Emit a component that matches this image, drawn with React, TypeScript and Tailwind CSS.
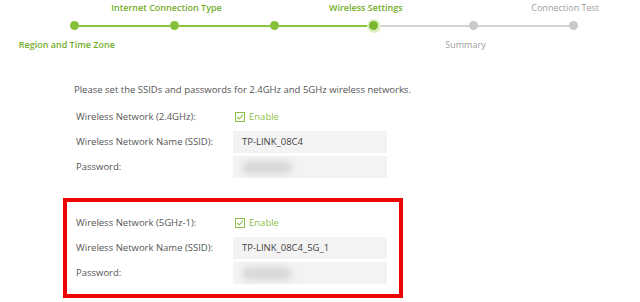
import React from "react";

const font = { fontFamily: '"Open Sans", "DejaVu Sans", sans-serif' };

function Check() {
  return (
    <svg width="10" height="10" viewBox="0 0 10 10" className="shrink-0">
      <rect x="0.5" y="0.5" width="9" height="9" fill="none" stroke="#8cbf4a" strokeWidth="1" />
      <path d="M2.3 5 L4.2 7 L8 2.6" fill="none" stroke="#8cbf4a" strokeWidth="1.1" />
    </svg>
  );
}

type Step = { top?: string; bottom?: string };
const steps: Step[] = [
  { bottom: "Region and Time Zone" },
  { top: "Internet Connection Type" },
  {},
  { top: "Wireless Settings" },
  { bottom: "Summary" },
  { top: "Connection Test" },
];
const current = 3;

function Stepper() {
  return (
    <div className="ml-[25px] grid w-[598px] grid-cols-6">
      {steps.map((s, i) => {
        const done = i <= current;
        const leftGreen = i <= current;
        const rightGreen = i < current;
        return (
          <div key={i} className="flex flex-col">
            <div className="flex h-[18px] items-start justify-center pt-[2px]">
              {s.top && (
                <span
                  className={`-translate-x-2 whitespace-nowrap text-[9px] leading-[12px] ${
                    done ? "text-[#74ad2a] font-semibold" : "text-[#9d9d9d]"
                  }`}
                >
                  {s.top}
                </span>
              )}
            </div>
            <div className="flex h-[15px] items-center">
              <div className={`h-[2px] flex-1 ${i === 0 ? "" : leftGreen ? "bg-[#8cc63f]" : "bg-[#d4d4d4]"}`} />
              {i === current ? (
                <div className="flex h-[14px] w-[14px] items-center justify-center rounded-full bg-[#dff0c4]">
                  <div className="h-[9px] w-[9px] rounded-full bg-[#7cb82f]" />
                </div>
              ) : (
                <div className={`h-[9px] w-[9px] rounded-full ${done ? "bg-[#84c03a]" : "bg-[#c9c9c9]"}`} />
              )}
              <div className={`h-[2px] flex-1 ${i === 5 ? "" : rightGreen ? "bg-[#8cc63f]" : "bg-[#d4d4d4]"}`} />
            </div>
            <div className="flex h-[19px] items-start justify-center pt-[6px]">
              {s.bottom && (
                <span
                  className={`-translate-x-2 whitespace-nowrap text-[9px] leading-[12px] ${
                    done ? "text-[#74ad2a] font-semibold" : "text-[#a0a0a0]"
                  }`}
                >
                  {s.bottom}
                </span>
              )}
            </div>
          </div>
        );
      })}
    </div>
  );
}

function Input({ value, blurred }: { value?: string; blurred?: boolean }) {
  return (
    <div className="flex h-[22px] w-[154px] items-center bg-[#f3f3f3] pl-[9px] text-[9.5px] text-[#444]">
      {value}
      {blurred && <div className="h-[13px] w-[50px] rounded-full bg-[#d8d8d8] blur-[3px]" />}
    </div>
  );
}

function Section({ band, ssid }: { band: string; ssid: string }) {
  return (
    <div className="flex flex-col">
      <div className="flex h-[16px] items-center">
        <span className="w-[159px] text-[9.5px] text-[#555]">Wireless Network ({band}):</span>
        <div className="flex items-center gap-[4px]">
          <Check />
          <span className="text-[9.5px] text-[#8cbf4a]">Enable</span>
        </div>
      </div>
      <div className="mt-[6px] flex items-center">
        <span className="w-[157px] text-[9.5px] text-[#555]">Wireless Network Name (SSID):</span>
        <Input value={ssid} />
      </div>
      <div className="mt-[3px] flex items-center">
        <span className="w-[157px] text-[9.5px] text-[#555]">Password:</span>
        <Input blurred />
      </div>
    </div>
  );
}

export default function App() {
  return (
    <div className="h-[302px] w-[640px] overflow-hidden bg-white" style={font}>
      <Stepper />
      <div className="mt-[31px] pl-[74px] text-[9.5px] leading-[14px] text-[#555]">
        Please set the SSIDs and passwords for 2.4GHz and 5GHz wireless networks.
      </div>
      <div className="mt-[12px] pl-[76px]">
        <Section band="2.4GHz" ssid="TP-LINK_08C4" />
      </div>
      <div className="ml-[63px] mt-[20px] h-[100px] w-[340px] border-4 border-[#f00000] pl-[9px] pt-[13px]">
        <Section band="5GHz-1" ssid="TP-LINK_08C4_5G_1" />
      </div>
    </div>
  );
}
